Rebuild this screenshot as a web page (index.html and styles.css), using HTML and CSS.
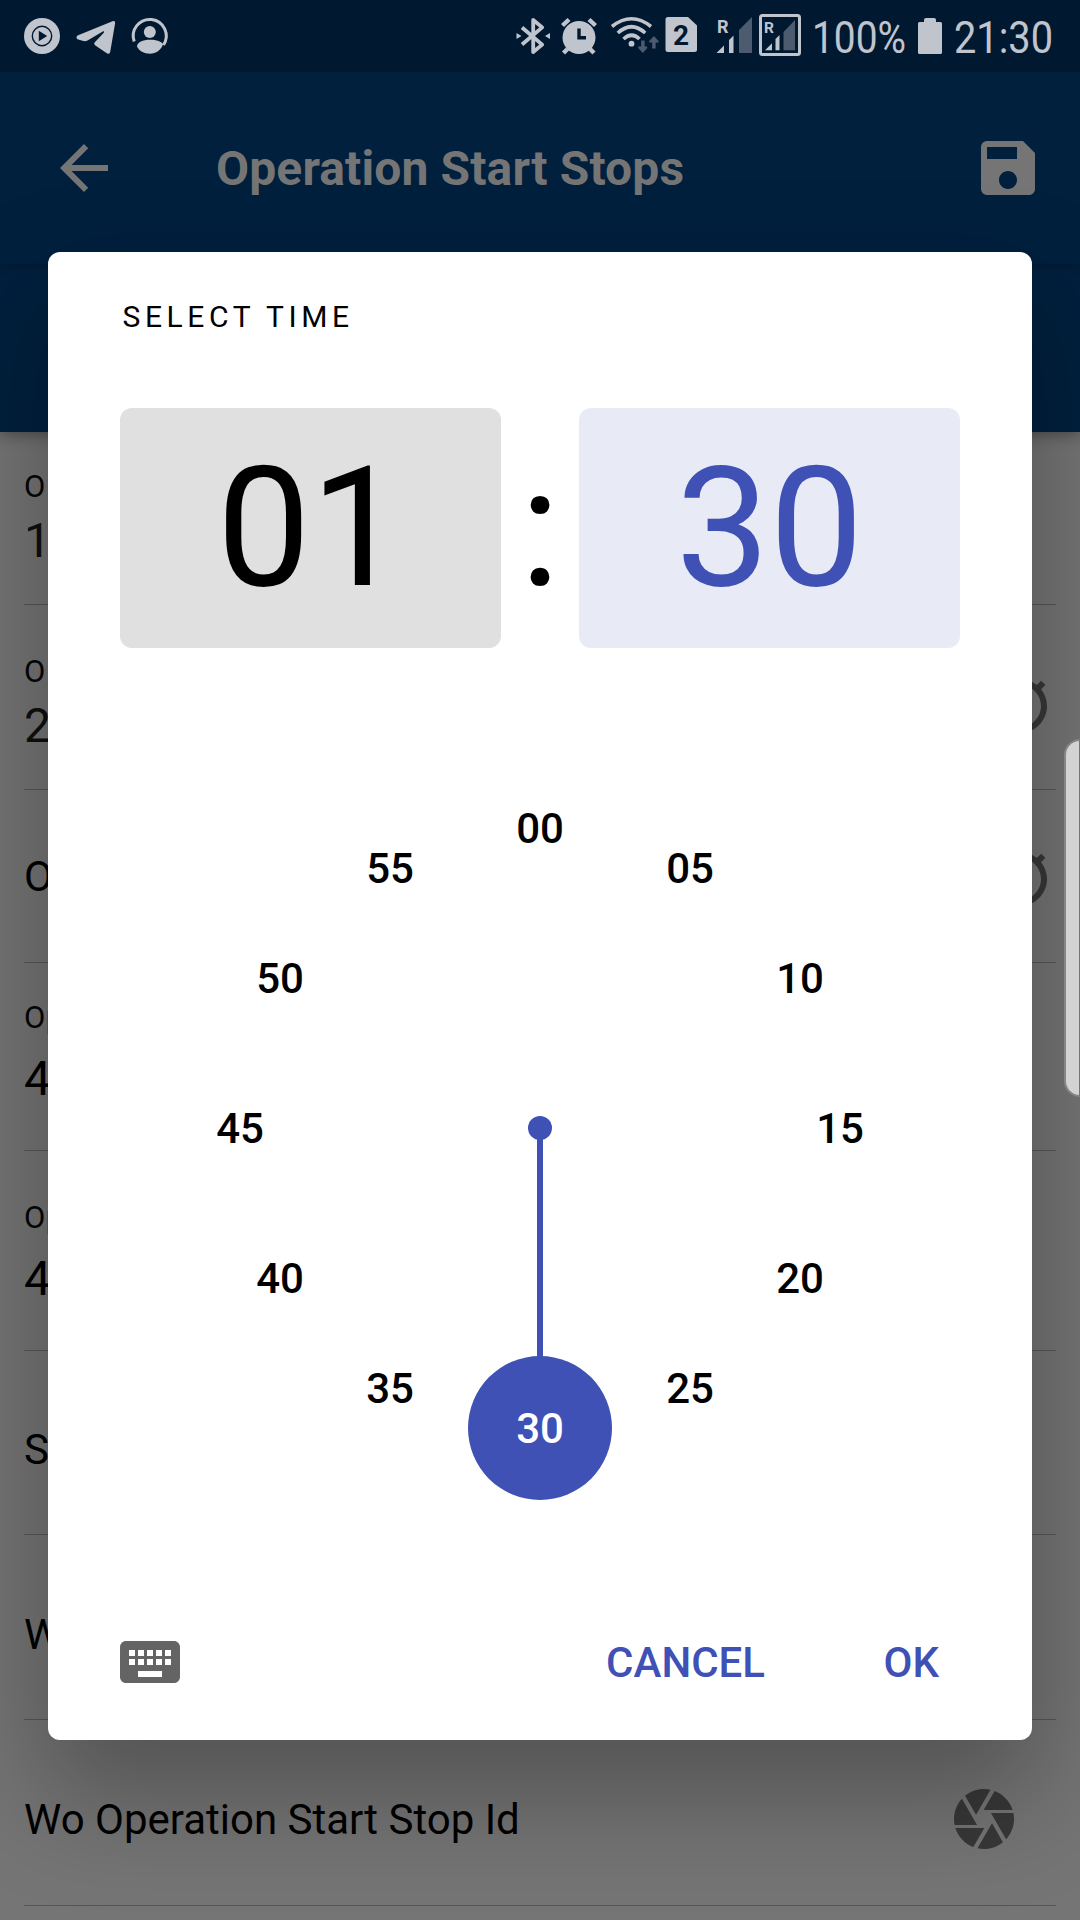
FILE: index.html
```html
<!DOCTYPE html>
<html lang="en">
<head>
<meta charset="utf-8">
<title>Operation Start Stops</title>
<link rel="stylesheet" href="styles.css">
</head>
<body>
<div class="screen">
  <header class="status">
    <svg class="status-left" width="180" height="72" viewBox="0 0 180 72">
      <circle cx="42" cy="36" r="18" fill="#c0c5cd"/>
      <circle cx="42" cy="36" r="9.7" fill="none" stroke="#001930" stroke-width="1.4"/>
      <path d="M38.8 30.8v10.4l8.4-5.2z" fill="#001930"/>
      <path d="M77.5 35.6 112.5 21.2q3-1 2.6 2L110.2 52q-.6 2.6-3 1.4L95 45.2q-1.700-1.400-.2-3l9-9.400q1-2-1-1.300L87.500 40.600q-2.500 1-5 .2l-5-1.500q-2-1.500 0-3.700z" fill="#c0c5cd"/>
      <path d="M134.200 41.500A16.500 16.500 0 1 1 163.500 45" fill="none" stroke="#c0c5cd" stroke-width="3"/>
      <circle cx="149.800" cy="32" r="6" fill="#c0c5cd"/>
      <path d="M137 46.500c0-4 6-6.700 13-6.700 6.500 0 12 2 13 4.500-2 6-7 9.400-13 9.400s-11-3-13-7.200z" fill="#c0c5cd"/>
    </svg>
    <div class="status-right">
      <svg width="42" height="72" viewBox="514 0 42 72">
        <path d="M522 27.500 542.200 44.600 533.200 52V20l9 7.400L522 44.500" fill="none" stroke="#c0c5cd" stroke-width="3.800" stroke-linejoin="round"/>
        <path d="M516.500 33l5 3-5 3zM550 33l-5 3 5 3z" fill="#c0c5cd"/>
      </svg>
      <svg width="50" height="72" viewBox="556 0 50 72">
        <circle cx="579" cy="37.500" r="16.500" fill="#c0c5cd"/>
        <path d="M562.500 25.500l6.500-6M589 19.500l6.500 6M567.500 49l-4 4M590 49l4 4" stroke="#c0c5cd" stroke-width="4.400"/>
        <path d="M579 28.500v9.200h7" fill="none" stroke="#001930" stroke-width="3.400"/>
      </svg>
      <svg width="56" height="72" viewBox="606 0 56 72">
        <g fill="none" stroke="#c0c5cd" stroke-width="3.600">
          <path d="M612 26.500q19.500-15.500 39 0M617.800 33q13.700-12.500 27.400 0M623.500 39q8.200-7.500 16 0"/>
        </g>
        <circle cx="631.500" cy="43.700" r="2.900" fill="#c0c5cd"/>
        <path d="M641.200 40.500h3.400v6h2.600v1.500l-4.300 5-4.700-5v-1.500h3zM652.200 48.500h3.400v-6h3v-1.500l-4.700-5-4.700 5v1.500h3z" fill="#4c5c6e"/>
      </svg>
      <svg width="46" height="72" viewBox="662 0 46 72">
        <path d="M668 17h20l9 8.500V49.500q0 2.500-2.500 2.500H668q-2.500 0-2.500-2.500v-30q0-2.500 2.500-2.500z" fill="#c0c5cd"/>
        <text class="sim" x="681" y="45" text-anchor="middle">2</text>
      </svg>
      <svg width="48" height="72" viewBox="708 0 48 72">
        <text class="roam" x="717" y="32.500">R</text>
        <path d="M716.500 53h7.500v-7.500zM729 53h4.500V35.500L729 40z" fill="#c0c5cd"/>
        <path d="M739 53h13V17L739 30z" fill="#4c5c6e"/>
      </svg>
      <svg width="52" height="72" viewBox="756 0 52 72">
        <rect x="760.500" y="15.500" width="39" height="39" rx="2" fill="none" stroke="#c0c5cd" stroke-width="3"/>
        <text class="roam roam-small" x="764" y="32.500">R</text>
        <path d="M765 50.300h7v-7zM775.500 50.300h4V35l-4 4z" fill="#c0c5cd"/>
        <path d="M783.500 50.300H795V20l-11.500 12z" fill="#4c5c6e"/>
      </svg>
      <svg width="106" height="72" viewBox="808 0 106 72">
        <text class="clock" x="812" y="53" textLength="94" lengthAdjust="spacingAndGlyphs">100%</text>
      </svg>
      <svg width="34" height="72" viewBox="914 0 34 72">
        <path d="M919.500 22h4.500v-2q0-2 2-2h8q2 0 2 2v2h4.500q1.500 0 1.500 1.500v29q0 1.500-1.500 1.500h-21q-1.500 0-1.500-1.500v-29q0-1.500 1.500-1.500z" fill="#c0c5cd"/>
      </svg>
      <svg width="132" height="72" viewBox="948 0 132 72">
        <text class="clock" x="954" y="53" textLength="99" lengthAdjust="spacingAndGlyphs">21:30</text>
      </svg>
    </div>
  </header>

  <nav class="appbar">
    <svg class="icon" viewBox="0 0 24 24"><path d="M20 11H7.830l5.590-5.590L12 4l-8 8 8 8 1.410-1.410L7.830 13H20v-2z"/></svg>
    <h1 class="title">Operation Start Stops</h1>
    <svg class="icon" viewBox="0 0 24 24"><path d="M17 3H5a2 2 0 0 0-2 2v14a2 2 0 0 0 2 2h14c1.100 0 2-.9 2-2V7l-4-4zm-5 16c-1.660 0-3-1.340-3-3s1.340-3 3-3 3 1.340 3 3-1.340 3-3 3zm3-10H5V5h10v4z"/></svg>
  </nav>
  <div class="subbar"></div>

  <main class="form">
    <div class="row row-1"><div class="field"><span class="label">Op</span><span class="value">1</span></div></div>
    <div class="row row-2"><div class="field"><span class="label">Op</span><span class="value">2</span></div>
      <svg class="row-icon" viewBox="0 0 24 24"><path d="M15 1H9v2h6V1zm-4 13h2V8h-2v6zm8.030-6.610l1.420-1.420c-.43-.51-.9-.99-1.410-1.410l-1.420 1.420C16.070 4.740 14.120 4 12 4c-4.970 0-9 4.030-9 9s4.020 9 9 9 9-4.030 9-9c0-2.120-.74-4.070-1.970-5.610zM12 20c-3.870 0-7-3.130-7-7s3.130-7 7-7 7 3.130 7 7-3.130 7-7 7z"/></svg>
    </div>
    <div class="row row-3"><span class="hint">O</span>
      <svg class="row-icon" viewBox="0 0 24 24"><path d="M15 1H9v2h6V1zm-4 13h2V8h-2v6zm8.030-6.610l1.420-1.420c-.43-.51-.9-.99-1.410-1.410l-1.420 1.420C16.070 4.740 14.120 4 12 4c-4.970 0-9 4.030-9 9s4.020 9 9 9 9-4.030 9-9c0-2.120-.74-4.070-1.970-5.610zM12 20c-3.870 0-7-3.130-7-7s3.130-7 7-7 7 3.130 7 7-3.130 7-7 7z"/></svg>
    </div>
    <div class="row row-4"><div class="field"><span class="label">Op</span><span class="value">4</span></div></div>
    <div class="row row-5"><div class="field"><span class="label">Op</span><span class="value">4</span></div></div>
    <div class="row row-6"><span class="hint">S</span></div>
    <div class="row row-7"><span class="hint">W</span></div>
    <div class="row row-8"><span class="hint">Wo Operation Start Stop Id</span>
      <svg class="row-icon shutter" viewBox="0 0 24 24"><path d="M9.400 10.500l4.770-8.260C13.470 2.090 12.750 2 12 2c-2.400 0-4.600.85-6.320 2.250l3.660 6.350.06-.1zM21.540 9c-.92-2.920-3.150-5.260-6-6.340L11.880 9h9.660zm.26 1h-7.490l.29.5 4.760 8.250C21 16.970 22 14.610 22 12c0-.69-.07-1.350-.2-2zM8.540 12l-3.900-6.750C3.010 7.030 2 9.390 2 12c0 .69.07 1.350.2 2h7.490l-1.150-2zm-6.080 3c.92 2.920 3.150 5.260 6 6.340L12.120 15H2.460zm11.270 0l-3.900 6.760c.7.15 1.420.24 2.170.24 2.400 0 4.600-.85 6.320-2.250l-3.660-6.350-.93 1.600z"/></svg>
    </div>
  </main>

  <section class="dialog">
    <h2 class="caption">SELECT TIME</h2>
    <div class="time">
      <div class="box hour">01</div>
      <div class="colon">:</div>
      <div class="box minute">30</div>
    </div>
    <svg class="dial" width="744" height="744" viewBox="-372 -372 744 744">
      <circle r="12" fill="#3f51b5"/>
      <path d="M0 0V300" stroke="#3f51b5" stroke-width="6"/>
      <circle cy="300" r="72" fill="#3f51b5"/>
      <g class="numbers">
        <text x="0" y="-285">00</text>
        <text x="150" y="-245">05</text>
        <text x="260" y="-135">10</text>
        <text x="300" y="15">15</text>
        <text x="260" y="165">20</text>
        <text x="150" y="275">25</text>
        <text class="selected" x="0" y="315">30</text>
        <text x="-150" y="275">35</text>
        <text x="-260" y="165">40</text>
        <text x="-300" y="15">45</text>
        <text x="-260" y="-135">50</text>
        <text x="-150" y="-245">55</text>
      </g>
    </svg>
    <div class="actions">
      <svg class="icon keyboard" viewBox="0 0 24 24"><path d="M20 5H4c-1.100 0-1.990.9-1.990 2L2 17c0 1.100.9 2 2 2h16c1.100 0 2-.9 2-2V7c0-1.100-.9-2-2-2zm-9 3h2v2h-2V8zm0 3h2v2h-2v-2zM8 8h2v2H8V8zm0 3h2v2H8v-2zm-1 2H5v-2h2v2zm0-3H5V8h2v2zm9 7H8v-2h8v2zm0-4h-2v-2h2v2zm0-3h-2V8h2v2zm3 3h-2v-2h2v2zm0-3h-2V8h2v2z"/></svg>
      <span class="button">CANCEL</span>
      <span class="button">OK</span>
    </div>
  </section>

  <div class="edge-handle"></div>
</div>
</body>
</html>
```
FILE: styles.css
```css
* {
  box-sizing: border-box;
}

body {
  margin: 0;
  font-family: Roboto, sans-serif;
}

.screen {
  position: relative;
  display: flex;
  flex-direction: column;
  width: 1080px;
  height: 1920px;
  overflow: hidden;
  background: #757575;
}

svg {
  display: block;
  flex: none;
  overflow: visible;
}

/* Status bar */
.status {
  display: flex;
  justify-content: space-between;
  height: 72px;
  background: #001930;
}

.status-right {
  display: flex;
}

.clock {
  font-size: 44px;
  fill: #c0c5cd;
}

.sim {
  font-size: 28px;
  font-weight: 700;
  fill: #001930;
}

.roam {
  font-size: 18px;
  font-weight: 700;
  fill: #c0c5cd;
}

.roam-small {
  font-size: 15.5px;
}

/* App bar */
.appbar {
  display: flex;
  align-items: center;
  height: 192px;
  padding: 0 36px 0 48px;
  background: #00203e;
  box-shadow: 0 2px 8px rgba(0, 0, 0, 0.25);
  z-index: 1;
}

.icon {
  width: 72px;
  height: 72px;
  fill: #757575;
}

.title {
  flex: 1;
  margin: 0 0 0 96px;
  padding-top: 2px;
  font-size: 48px;
  font-weight: 700;
  line-height: 56px;
  letter-spacing: 0.12px;
  color: #757575;
}

.subbar {
  height: 168px;
  background: #00203e;
  box-shadow: 0 3px 14px rgba(0, 0, 0, 0.35);
}

/* Form rows behind the dialog */
.form {
  display: flex;
  flex-direction: column;
  padding: 0 24px;
}

.row {
  display: flex;
  align-items: flex-end;
  justify-content: space-between;
  border-bottom: 1px solid #555657;
  height: 185px;
}

.row-1,
.row-3 {
  height: 173px;
}

.row-4 {
  height: 188px;
}

.row-5 {
  height: 200px;
}

.row-6 {
  height: 184px;
}

.row-8 {
  height: 186px;
}

.field {
  display: flex;
  flex-direction: column;
  gap: 8px;
  padding-bottom: 35px;
}

.row-4 .field,
.row-5 .field {
  gap: 15px;
  padding-bottom: 43px;
}

.label {
  font-size: 31px;
  line-height: 36px;
  letter-spacing: 1.2px;
  color: #050505;
}

.row-4 .label,
.row-5 .label {
  letter-spacing: 0.4px;
}

.value {
  font-size: 48px;
  line-height: 56px;
  color: #0f0f0f;
}

.row-4 .value,
.row-5 .value {
  color: #000;
}

.hint {
  padding-bottom: 60px;
  font-size: 42px;
  line-height: 50px;
  color: #000;
}

.row-6 .hint,
.row-7 .hint {
  padding-bottom: 59px;
}

.row-icon {
  width: 72px;
  height: 72px;
  margin-bottom: 50px;
  fill: #383838;
}

.shutter {
  margin-right: 36px;
}

/* Time picker dialog */
.dialog {
  position: absolute;
  left: 48px;
  top: 252px;
  z-index: 2;
  display: flex;
  flex-direction: column;
  width: 984px;
  height: 1488px;
  padding: 47px 72px 42px;
  border-radius: 12px;
  background: #fff;
  box-shadow: 0 50px 110px 8px rgba(0, 0, 0, 0.29);
}

.caption {
  margin: 0 0 73px;
  padding-left: 2.5px;
  font-size: 30px;
  font-weight: 400;
  line-height: 36px;
  letter-spacing: 4.6px;
  color: #000;
}

.time {
  display: grid;
  grid-template-columns: 381px 78px 381px;
  height: 240px;
  font-size: 167px;
  line-height: 241px;
  text-align: center;
}

.box {
  height: 240px;
  border-radius: 12px;
}

.hour {
  background: #e0e0e0;
}

.minute {
  background: #e8eaf6;
  color: #3f51b5;
}

.dial {
  align-self: center;
  margin-top: 108px;
}

.numbers {
  font-size: 42px;
  font-weight: 500;
  text-anchor: middle;
}

.selected {
  fill: #fff;
}

.actions {
  display: flex;
  align-items: center;
  height: 72px;
  margin: auto 0 0 -6px;
}

.keyboard {
  margin-right: auto;
  fill: #646464;
}

.button {
  margin-right: 21px;
  padding-top: 2px;
  font-size: 42px;
  font-weight: 500;
  line-height: 50px;
  color: #3f51b5;
}

.button + .button {
  margin-left: 97.5px;
}

/* Edge panel handle on the right side of the display */
.edge-handle {
  position: absolute;
  right: 0;
  top: 739px;
  z-index: 3;
  width: 16px;
  height: 358px;
  border: 2px solid #868686;
  border-right: 1px solid #757575;
  border-radius: 18px 0 0 18px;
  background: #d3d3d3;
}
```
